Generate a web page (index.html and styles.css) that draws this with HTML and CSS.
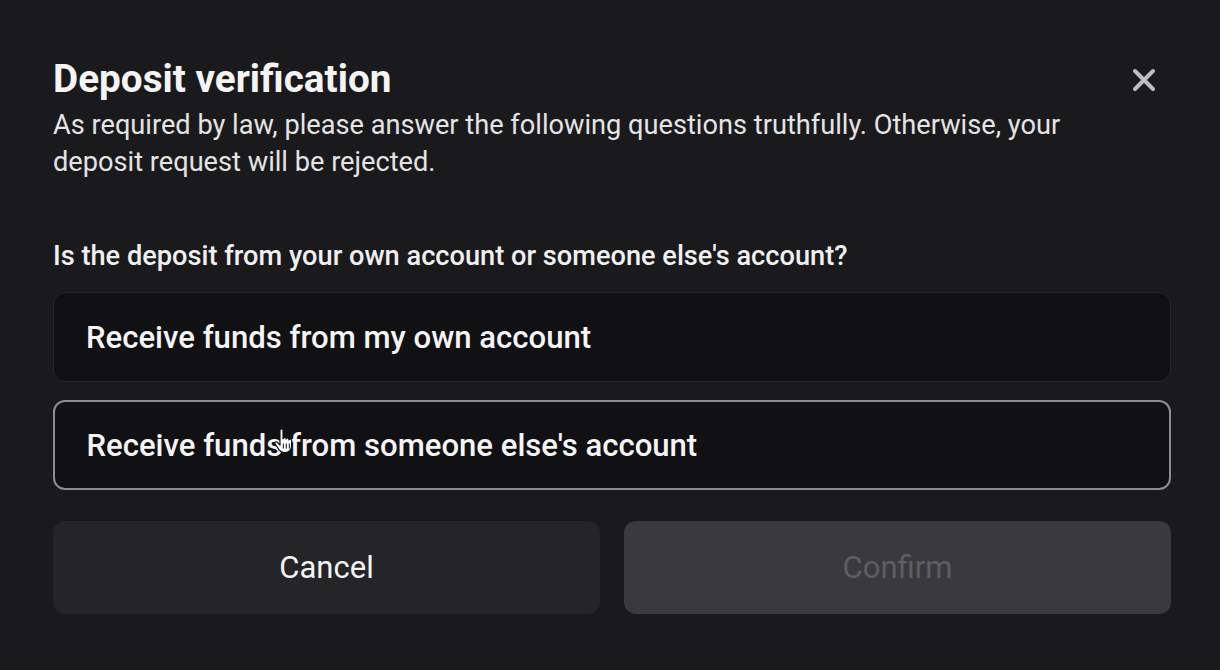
FILE: index.html
```html
<!DOCTYPE html>
<html lang="en">
<head>
<meta charset="utf-8">
<title>Deposit verification</title>
<link rel="stylesheet" href="styles.css">
</head>
<body>
<div class="dialog">
  <div class="header">
    <div class="heading">
      <h1 class="title">Deposit verification</h1>
      <p class="subtitle">As required by law, please answer the following questions truthfully. Otherwise, your deposit request will be rejected.</p>
    </div>
    <button class="close" aria-label="Close">
      <svg width="24" height="24" viewBox="0 0 24 24"><path d="M3 3L21 21M21 3L3 21" stroke="#bdbdc0" stroke-width="4" stroke-linecap="round"/></svg>
    </button>
  </div>
  <p class="question">Is the deposit from your own account or someone else's account?</p>
  <div class="options">
    <div class="option">Receive funds from my own account</div>
    <div class="option option-hover">Receive funds from someone else's account
      <svg class="cursor" width="22" height="26" viewBox="0 0 22 26"><path d="M6 2.5c0-1 .7-1.6 1.5-1.6S9 1.5 9 2.5v8.2l.3-.1c.1-.8.7-1.3 1.4-1.3s1.3.5 1.4 1.3v.4c.2-.7.8-1.1 1.4-1.1.8 0 1.4.6 1.4 1.4v.6c.2-.6.7-1 1.3-1 .8 0 1.4.6 1.4 1.4V18c0 3.5-2.6 6.5-6.4 6.5h-1.2c-2.2 0-3.6-.9-4.9-2.7L1.2 16c-.5-.8-.3-1.600.4-2 .7-.4 1.5-.2 2 .5L6 17.2z" fill="#fff" stroke="#111" stroke-width="1.2" stroke-linejoin="round"/><path d="M9.3 15.5v5M12.3 15.5v5M15.3 15.5v5" stroke="#111" stroke-width="1"/></svg>
    </div>
  </div>
  <div class="actions">
    <button class="btn btn-cancel">Cancel</button>
    <button class="btn btn-confirm" disabled>Confirm</button>
  </div>
</div>
</body>
</html>
```
FILE: styles.css
```css
* { box-sizing: border-box; }
html, body {
  margin: 0;
  height: 100%;
  background: #1a1a1d;
}
body {
  font-family: Roboto, "Liberation Sans", Arial, sans-serif;
  color: #f2f2f2;
}
.dialog {
  padding: 55px 49px 0 53px;
  display: flex;
  flex-direction: column;
}
.header {
  display: flex;
  justify-content: space-between;
  align-items: flex-start;
}
.heading { flex: 1; }
.title {
  margin: 0;
  font-size: 38.7px;
  font-weight: 700;
  line-height: 48px;
  color: #f4f4f4;
}
.subtitle {
  margin: 4px 0 0;
  font-size: 27.2px;
  line-height: 37px;
  color: #e4e4e4;
  max-width: 1070px;
}
.close {
  margin-top: 13px;
  margin-right: 15px;
  background: none;
  border: 0;
  padding: 0;
  width: 24px;
  height: 24px;
  display: flex;
}
.question {
  margin: 60px 0 0;
  font-size: 27.2px;
  font-weight: 500;
  line-height: 30px;
  color: #f0f0f0;
}
.options {
  margin-top: 21px;
  display: flex;
  flex-direction: column;
  gap: 18px;
}
.option {
  position: relative;
  height: 90px;
  border: 1.5px solid #28282c;
  border-radius: 12px;
  background: #111114;
  display: flex;
  align-items: center;
  padding-left: 32px;
  font-size: 31.1px;
  font-weight: 500;
  color: #f4f4f4;
}
.option-hover {
  border: 2px solid #8d8d91;
  padding-left: 31.5px;
}
.cursor {
  position: absolute;
  left: 219px;
  top: 26px;
}
.actions {
  margin-top: 31px;
  display: flex;
  gap: 24px;
}
.btn {
  flex: 1;
  height: 93px;
  border: 0;
  border-radius: 12px;
  font-family: inherit;
  font-size: 31px;
  font-weight: 400;
}
.btn-cancel {
  background: #252528;
  color: #f4f4f4;
}
.btn-confirm {
  background: #3a3a3d;
  color: #5e5e62;
}
```
